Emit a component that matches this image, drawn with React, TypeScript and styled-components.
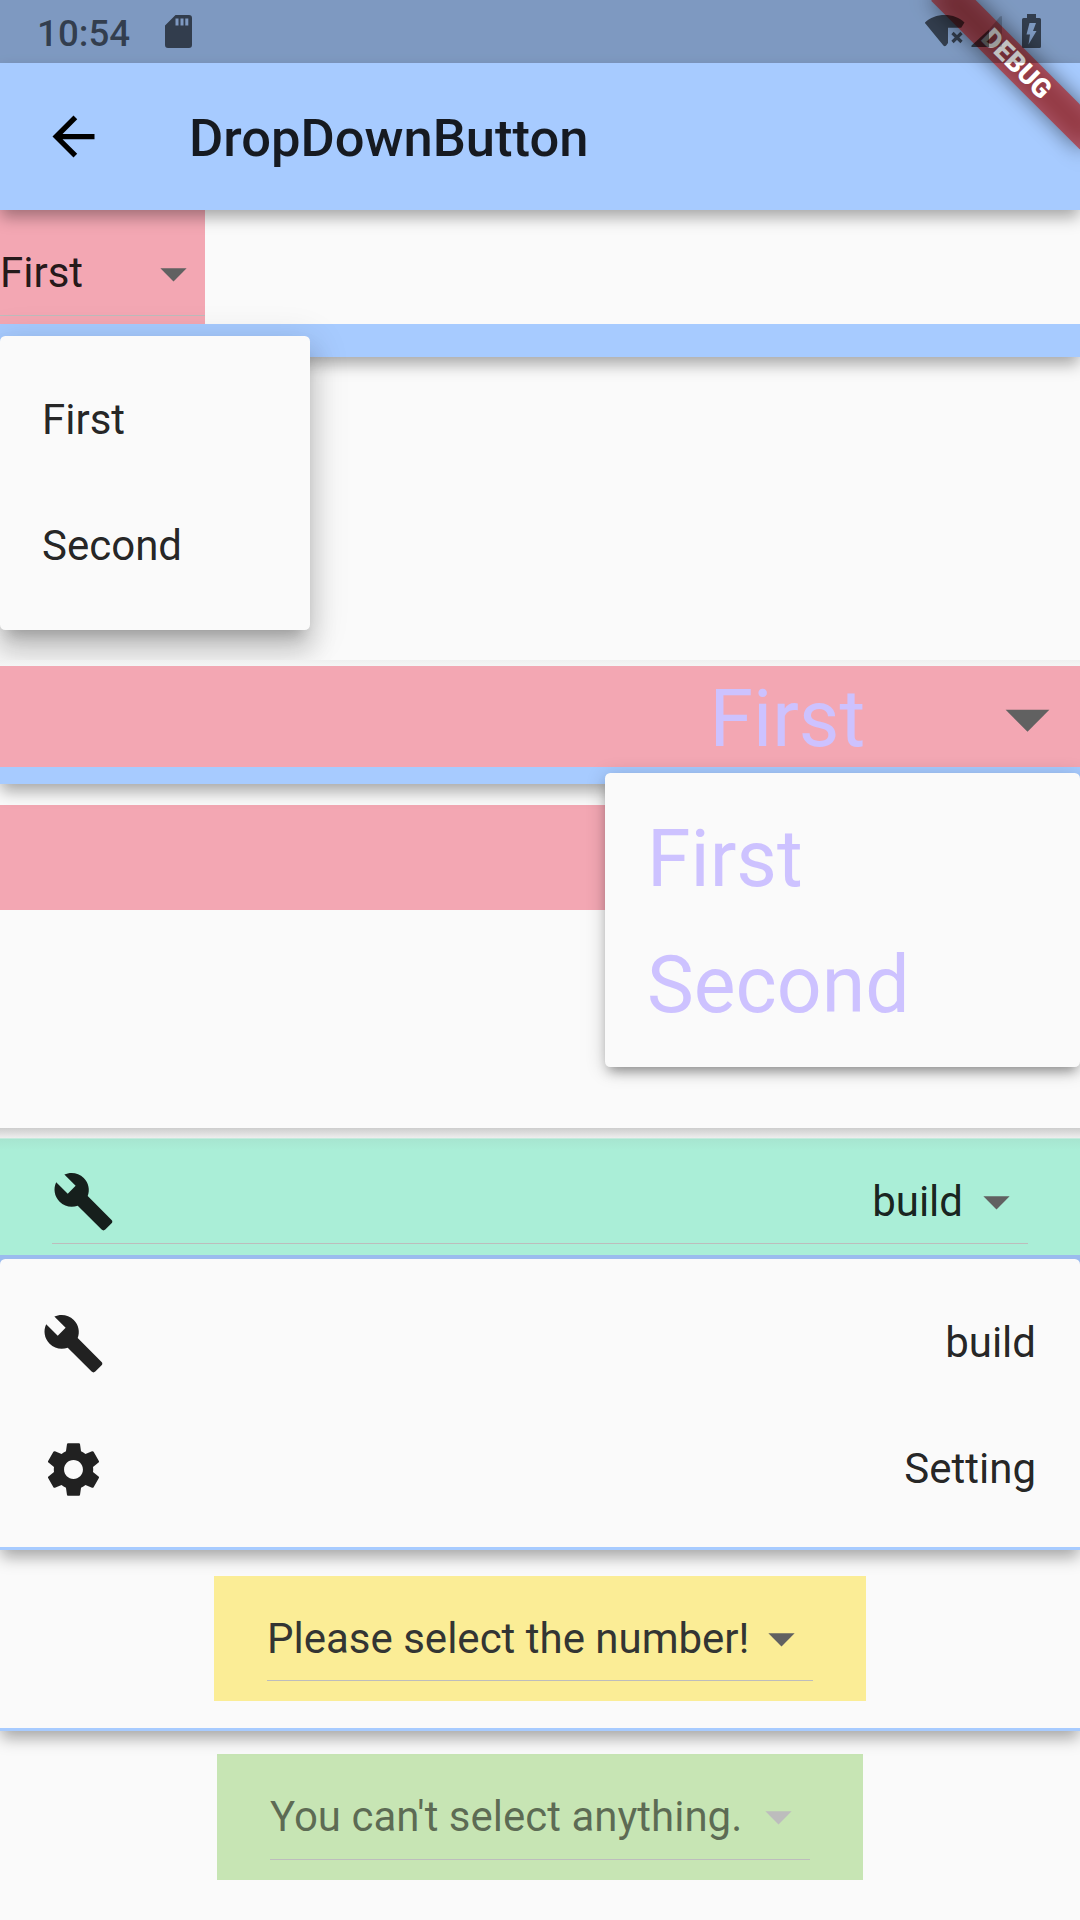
import React from "react";
import styled, { createGlobalStyle, css } from "styled-components";

const BLUE = "#a7cbff";
const PINK = "#f3a7b3";
const MINT = "#aaeed7";
const YELLOW = "#fbed96";
const GREEN = "#c7e5b4";
const LAVENDER = "#cdc2ff";
const PAPER = "#fafafa";
const BAR_SHADOW = "0 8px 15px -1px rgba(0, 0, 0, 0.34)";

const GlobalStyle = createGlobalStyle`
  body {
    margin: 0;
    background: ${PAPER};
    font-family: Roboto, "Liberation Sans", sans-serif;
  }
  * { box-sizing: border-box; }
`;

const Screen = styled.div`
  position: relative;
  display: flex;
  flex-direction: column;
  width: 1080px;
  height: 1920px;
  overflow: hidden;
  background: ${PAPER};
  color: rgba(0, 0, 0, 0.87);
  font-size: 42px;
  white-space: nowrap;
`;

const StatusBacking = styled.div`
  flex: none;
  height: 210px;
  margin-bottom: -210px;
  background: ${BLUE};
`;

const StatusBar = styled.header`
  position: relative;
  z-index: 4;
  flex: none;
  display: flex;
  align-items: flex-start;
  height: 63px;
  padding: 0 39px 0 37px;
  background: rgba(0, 0, 0, 0.245);
  color: rgba(0, 0, 0, 0.6);
`;

const Clock = styled.span`
  width: 128px;
  padding-top: 12px;
  font-size: 36.75px;
  font-weight: 500;
  line-height: 43px;
`;

const StatusIcon = styled.svg<{ $gap?: number }>`
  flex: none;
  display: block;
  margin-top: 14px;
  margin-left: ${(p) => p.$gap ?? 0}px;
`;

const Spacer = styled.div`
  flex: 1;
`;

const AppBar = styled.nav`
  position: relative;
  z-index: 2;
  flex: none;
  display: flex;
  align-items: center;
  height: 147px;
  padding-left: 42px;
  background: ${BLUE};
  box-shadow: ${BAR_SHADOW};
`;

const Title = styled.h1`
  margin: 2px 0 0 84px;
  font-size: 52.5px;
  font-weight: 500;
  line-height: 62px;
`;

const Ribbon = styled.div`
  position: absolute;
  z-index: 3;
  left: 975px;
  top: 73.5px;
  width: 210px;
  height: 31.5px;
  transform-origin: 105px -73.5px;
  transform: rotate(45deg);
  display: flex;
  align-items: center;
  justify-content: center;
  color: #fff;
  font-size: 26.8px;
  font-weight: 900;

  &::before,
  &::after {
    content: "";
    position: absolute;
    inset: 0;
  }
  &::before {
    background: rgba(0, 0, 0, 0.5);
    filter: blur(10.4px);
  }
  &::after {
    background: rgba(183, 28, 28, 0.627);
  }
`;

const RibbonText = styled.span`
  position: relative;
  z-index: 1;
`;

const Section = styled.section<{ $height?: number }>`
  position: relative;
  flex: none;
  display: flex;
  flex-direction: column;
  overflow: hidden;
  ${(p) => p.$height && css`height: ${p.$height}px;`}
`;

/* The shadow is cast by a taller box so that thin bars get the full depth;
   only the part below the bar is kept. */
const Bar = styled.div<{ $height: number }>`
  position: relative;
  z-index: 1;
  flex: none;
  height: ${(p) => p.$height}px;
  background: ${BLUE};

  &::after {
    content: "";
    position: absolute;
    left: 0;
    right: 0;
    bottom: 0;
    height: 60px;
    box-shadow: ${BAR_SHADOW};
    clip-path: inset(60px 0 -40px 0);
  }
`;

const ShadowGap = styled.div<{ $height: number; $from: string; $to: string }>`
  flex: none;
  height: ${(p) => p.$height}px;
  background: linear-gradient(${(p) => p.$from}, ${(p) => p.$to});
`;

const Button = styled.div<{
  $bg: string;
  $height: number;
  $width?: number;
  $top?: number;
  $padX?: number;
  $padTop?: number;
  $padBottom?: number;
}>`
  flex: none;
  display: flex;
  align-self: ${(p) => (p.$width ? "center" : "stretch")};
  width: ${(p) => (p.$width ? `${p.$width}px` : "auto")};
  height: ${(p) => p.$height}px;
  margin-top: ${(p) => p.$top ?? 0}px;
  padding: ${(p) => p.$padTop ?? 0}px ${(p) => p.$padX ?? 0}px ${(p) => p.$padBottom ?? 0}px;
  background: ${(p) => p.$bg};
`;

const StartButton = styled(Button)`
  align-self: flex-start;
`;

const Field = styled.div<{
  $underline?: boolean;
  $tone?: string;
  $padTop?: number;
  $padBottom?: number;
  $end?: boolean;
}>`
  flex: 1;
  display: flex;
  align-items: center;
  justify-content: ${(p) => (p.$end ? "flex-end" : "flex-start")};
  padding: ${(p) => p.$padTop ?? 0}px 0 ${(p) => p.$padBottom ?? 0}px;
  color: ${(p) => p.$tone ?? "inherit"};
  ${(p) => p.$underline && css`border-bottom: 1px solid #bdbdbd;`}
`;

const Label = styled.span<{ $end?: boolean; $raise?: number }>`
  flex: 1;
  padding-right: ${(p) => (p.$end ? 2 : 0)}px;
  padding-bottom: ${(p) => p.$raise ?? 0}px;
  text-align: ${(p) => (p.$end ? "right" : "left")};
`;

const BigLabel = styled.span<{ $width?: number; $raise?: number }>`
  width: ${(p) => (p.$width ? `${p.$width}px` : "auto")};
  padding: 4px 0 ${(p) => p.$raise ?? 0}px;
  color: ${LAVENDER};
  font-size: 78.75px;
  line-height: 92px;
`;

const BlankSpace = styled.div<{ $height: number }>`
  flex: none;
  height: ${(p) => p.$height}px;
`;

const Menu = styled.ul`
  margin: 0;
  padding: 21px 0;
  list-style: none;
  background: ${PAPER};
  border-radius: 5.25px;
`;

const FirstMenu = styled(Menu)`
  position: absolute;
  z-index: 2;
  top: 126px;
  left: 0;
  width: 310px;
  box-shadow: 0 13px 13px -8px rgba(0, 0, 0, 0.2), 0 21px 26px 3px rgba(0, 0, 0, 0.14),
    0 8px 37px 5px rgba(0, 0, 0, 0.12);
`;

const BigMenu = styled(Menu)`
  position: absolute;
  z-index: 2;
  top: 113px;
  right: 0;
  width: 475px;
  box-shadow: 0 8px 12px -4px rgba(0, 0, 0, 0.34), 0 3px 20px 0 rgba(0, 0, 0, 0.2);
`;

const BlueEdge = styled.div`
  flex: none;
  height: 4px;
  background: #9bbbee;
`;

const MenuClip = styled.div`
  flex: none;
  height: 288px;
  overflow: hidden;
  background: #9bbbee;
`;

const MenuItem = styled.li`
  display: flex;
  align-items: center;
  justify-content: space-between;
  height: 126px;
  padding: 0 42px;
`;

const ItemText = styled.span`
  padding: 0 2px 2px 0;
`;

const Icon = styled.svg`
  flex: none;
  display: block;
  fill: currentColor;
`;

function Arrow({ size = 63, color = "#616161" }: { size?: number; color?: string }) {
  return (
    <Icon width={size} height={size} viewBox="0 0 24 24" color={color}>
      <path d="M7 10l5 5 5-5z" />
    </Icon>
  );
}

function BuildIcon() {
  return (
    <Icon width="63" height="63" viewBox="0 0 24 24">
      <path d="M22.7 19l-9.1-9.1c.9-2.3.4-5-1.5-6.9-2-2-5-2.4-7.4-1.3L9 6 6 9 1.6 4.7C.4 7.1.9 10.1 2.9 12.1c1.9 1.9 4.6 2.4 6.9 1.5l9.1 9.1c.4.4 1 .4 1.4 0l2.3-2.3c.5-.4.5-1.1.1-1.4z" />
    </Icon>
  );
}

function SettingsIcon() {
  return (
    <Icon width="63" height="63" viewBox="0 0 24 24">
      <path d="M19.43 12.98c.04-.32.07-.64.07-.98s-.03-.66-.07-.98l2.11-1.65c.19-.15.24-.42.12-.64l-2-3.46c-.12-.22-.39-.3-.61-.22l-2.49 1c-.52-.4-1.08-.73-1.69-.98l-.38-2.65C14.46 2.18 14.25 2 14 2h-4c-.25 0-.46.18-.49.42l-.38 2.65c-.61.25-1.17.59-1.69.98l-2.49-1c-.23-.09-.49 0-.61.22l-2 3.46c-.13.22-.07.49.12.64l2.11 1.65c-.04.32-.07.65-.07.98s.03.66.07.98l-2.11 1.65c-.19.15-.24.42-.12.64l2 3.46c.12.22.39.3.61.22l2.49-1c.52.4 1.08.73 1.69.98l.38 2.65c.03.24.24.42.49.42h4c.25 0 .46-.18.49-.42l.38-2.65c.61-.25 1.17-.59 1.69-.98l2.49 1c.23.09.49 0 .61-.22l2-3.46c.12-.22.07-.49-.12-.64l-2.11-1.65zM12 15.600c-1.990 0-3.600-1.610-3.600-3.600s1.610-3.600 3.600-3.600 3.600 1.610 3.600 3.600-1.610 3.600-3.600 3.600z" />
    </Icon>
  );
}

export default function App() {
  return (
    <Screen>
      <GlobalStyle />
      <StatusBacking />
      <StatusBar>
        <Clock>10:54</Clock>
        <StatusIcon width="27" height="34" viewBox="0 0 27 34" fill="currentColor">
          <path
            fillRule="evenodd"
            d="M10.500 1H24a3 3 0 0 1 3 3v27a3 3 0 0 1-3 3H3a3 3 0 0 1-3-3V11.500zM10.500 4.500v7h3v-7zM15.500 4.500v7h3v-7zM20.300 4.500v7h3v-7z"
          />
        </StatusIcon>
        <Spacer />
        <StatusIcon width="40" height="34" viewBox="0 0 40 34" fill="currentColor">
          <path d="M0 8.500C5 3.500 12 1 19.800 1S34.500 3.500 39.500 8.500L36.200 13.800H23V29L21.200 31.500Q19.800 32.800 18.400 31.500L.8 10Q-.2 9 0 8.500z" />
          <path d="M27.500 19l9 9M36.500 19l-9 9" stroke="currentColor" strokeWidth="3.200" fill="none" />
        </StatusIcon>
        <StatusIcon $gap={6} width="31" height="34" viewBox="0 0 31 34" fill="currentColor">
          <path d="M18 15.500V33H1.200Q-.3 32.500.6 31.400z" />
          <path d="M18 15.500L29 2.600Q31 1 31 3.200V31.500Q31 33 29.500 33H18z" opacity="0.33" />
        </StatusIcon>
        <StatusIcon $gap={20} width="19" height="34" viewBox="0 0 19 34" fill="currentColor">
          <path
            fillRule="evenodd"
            d="M5 0h9v4h3.500Q19 4 19 5.500v27Q19 34 17.500 34h-16Q0 34 0 32.500v-27Q0 4 1.500 4H5zM7.500 9L4.500 20.500H8L6.500 30.500 14.500 17H11L14 9z"
          />
        </StatusIcon>
      </StatusBar>
      <AppBar>
        <Icon width="63" height="63" viewBox="0 0 24 24" color="#000">
          <path d="M20 11H7.830l5.590-5.590L12 4l-8 8 8 8 1.410-1.410L7.830 13H20v-2z" />
        </Icon>
        <Title>DropDownButton</Title>
      </AppBar>
      <Ribbon>
        <RibbonText>DEBUG</RibbonText>
      </Ribbon>

      <Section $height={450}>
        <StartButton $bg={PINK} $width={205} $height={114} $padBottom={8.5}>
          <Field $underline $padTop={23}>
            <Label $raise={2}>First</Label>
            <Arrow />
          </Field>
        </StartButton>
        <Bar $height={33} />
        <FirstMenu>
          <MenuItem>
            <ItemText>First</ItemText>
          </MenuItem>
          <MenuItem>
            <ItemText>Second</ItemText>
          </MenuItem>
        </FirstMenu>
      </Section>

      <Section $height={468}>
        <ShadowGap $height={6} $from="#efefef" $to="#f5f5f5" />
        <Button $bg={PINK} $height={101}>
          <Field $end $padTop={3}>
            <BigLabel $width={265.5} $raise={3}>
              First
            </BigLabel>
            <Arrow size={105} />
          </Field>
        </Button>
        <Bar $height={17} />
        <BlankSpace $height={21} />
        <Button $bg={PINK} $height={105} />
        <BigMenu>
          <MenuItem>
            <BigLabel>First</BigLabel>
          </MenuItem>
          <MenuItem>
            <BigLabel>Second</BigLabel>
          </MenuItem>
        </BigMenu>
      </Section>

      <Section>
        <ShadowGap $height={10} $from="#cdcdcd" $to="#eeeeee" />
        <Button
          $bg={`linear-gradient(#c4eadd 1px, #a7e5d0 1px, ${MINT} 12px)`}
          $height={117}
          $padX={52}
          $padTop={31}
          $padBottom={11}
        >
          <Field $underline $padBottom={10}>
            <BuildIcon />
            <Label $end>build</Label>
            <Arrow />
          </Field>
        </Button>
        <BlueEdge />
        <MenuClip>
          <Menu>
            <MenuItem>
              <BuildIcon />
              <ItemText>build</ItemText>
            </MenuItem>
            <MenuItem>
              <SettingsIcon />
              <ItemText>Setting</ItemText>
            </MenuItem>
          </Menu>
        </MenuClip>
      </Section>
      <Bar $height={3} />

      <Section $height={178}>
        <Button
          $bg={YELLOW}
          $width={652}
          $height={125.5}
          $top={25.5}
          $padX={53}
          $padTop={20.5}
          $padBottom={20}
        >
          <Field $underline $tone="#333533">
            <Label>Please select the number!</Label>
            <Arrow />
          </Field>
        </Button>
      </Section>
      <Bar $height={3} />

      <Section $height={189}>
        <Button
          $bg={GREEN}
          $width={646}
          $height={126}
          $top={22.5}
          $padX={53}
          $padTop={21}
          $padBottom={20}
        >
          <Field $underline $tone="rgba(0, 0, 0, 0.54)">
            <Label>You can't select anything.</Label>
            <Arrow color="#bdbdbd" />
          </Field>
        </Button>
      </Section>
    </Screen>
  );
}
